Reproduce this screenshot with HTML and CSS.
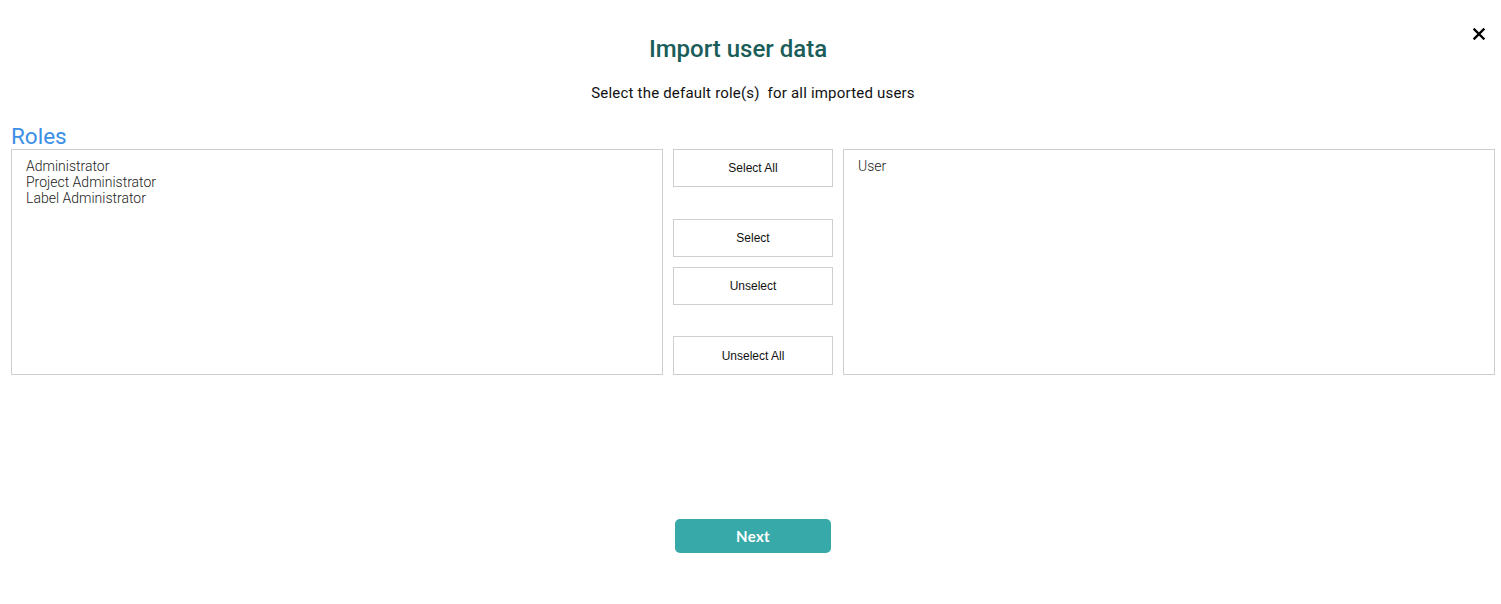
FILE: index.html
```html
<!DOCTYPE html>
<html>
<head>
<meta charset="utf-8">
<link rel="stylesheet" href="styles.css">
</head>
<body>
<div class="dialog">
  <button class="close" aria-label="Close">
    <svg width="12" height="12" viewBox="0 0 12 12"><path d="M1.5 1.5 L10.5 10.5 M10.5 1.5 L1.5 10.5" stroke="#000" stroke-width="2.4" stroke-linecap="square"/></svg>
  </button>
  <h1 class="title">Import user data</h1>
  <p class="subtitle">Select the default role(s)&nbsp; for all imported users</p>
  <div class="roles-label">Roles</div>
  <div class="picker">
    <div class="listbox">
      <div class="item">Administrator</div>
      <div class="item">Project Administrator</div>
      <div class="item">Label Administrator</div>
    </div>
    <div class="actions">
      <button class="act">Select All</button>
      <button class="act act-select">Select</button>
      <button class="act act-unselect">Unselect</button>
      <button class="act act-unall">Unselect All</button>
    </div>
    <div class="listbox">
      <div class="item">User</div>
    </div>
  </div>
  <div class="footer">
    <button class="next">Next</button>
  </div>
</div>
</body>
</html>
```

FILE: styles.css
```css
html, body {
  margin: 0;
  padding: 0;
  background: #fff;
}
body {
  font-family: Roboto, "Liberation Sans", sans-serif;
  width: 1501px;
  height: 604px;
  overflow: hidden;
}
.dialog {
  position: relative;
  padding: 0 6px 0 11px;
}
.close {
  position: absolute;
  top: 28px;
  left: 1473px;
  width: 12px;
  height: 12px;
  padding: 0;
  border: 0;
  background: none;
  display: flex;
}
.title {
  margin: 0;
  padding-top: 34px;
  padding-right: 30px;
  height: 30px;
  line-height: 30px;
  text-align: center;
  font-size: 24px;
  font-weight: 500;
  color: #1b5d59;
}
.subtitle {
  margin: 0;
  padding-top: 20px;
  height: 18px;
  line-height: 18px;
  text-align: center;
  font-size: 15px;
  letter-spacing: 0.2px;
  color: #111;
}
.roles-label {
  margin-top: 21px;
  height: 26px;
  line-height: 26px;
  font-size: 22.5px;
  color: #3b8fe6;
  font-weight: 400;
}
.picker {
  display: flex;
  gap: 10px;
  height: 226px;
}
.listbox {
  flex: 0 0 652px;
  box-sizing: border-box;
  border: 1px solid #cfcfcf;
  padding: 8px 14px;
}
.item {
  font-size: 14px;
  line-height: 16px;
  color: #222;
  font-weight: 300;
}
.actions {
  flex: 0 0 160px;
  display: flex;
  flex-direction: column;
}
.act {
  box-sizing: border-box;
  height: 38px;
  width: 160px;
  border: 1px solid #cfcfcf;
  background: #fff;
  font-family: "Liberation Sans", Arial, sans-serif;
  font-size: 12px;
  color: #111;
  padding: 0;
}
.act-select { margin-top: 32px; }
.act-unselect { margin-top: 10px; }
.act-unall { margin-top: 31px; height: 39px; }
.footer {
  display: flex;
  justify-content: center;
  padding-top: 144px;
}
.next {
  width: 156px;
  height: 34px;
  border: 0;
  border-radius: 5px;
  background: #37a9a8;
  color: #fff;
  font-family: Lato, "Open Sans", sans-serif;
  font-weight: 700;
  font-size: 15px;
  letter-spacing: 0.3px;
}
```
